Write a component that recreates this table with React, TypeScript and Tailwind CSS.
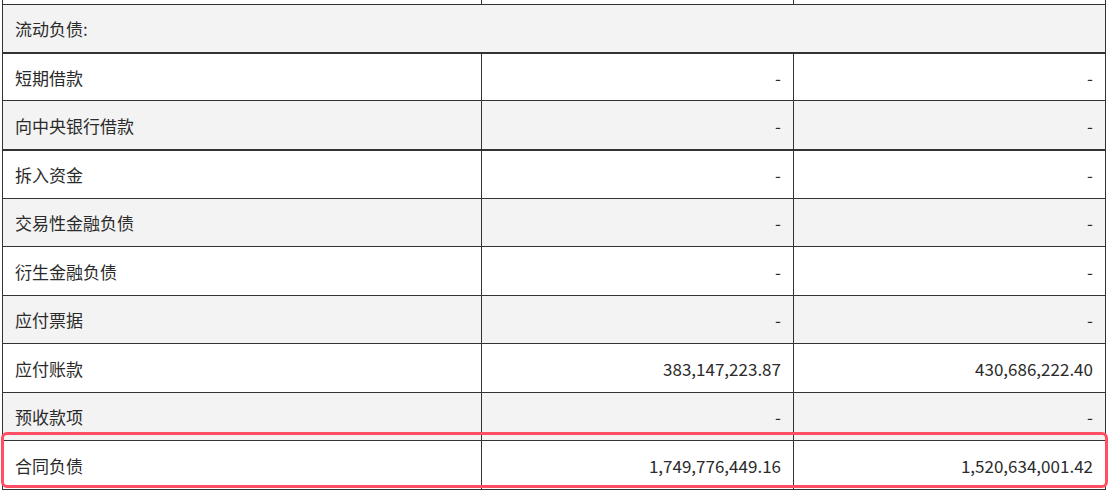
import React from 'react';

type Row = {
  label: string;
  a: string;
  b: string;
  gray: boolean;
  h: string;
  thick?: boolean;
};

const rows: Row[] = [
  { label: '短期借款', a: '-', b: '-', gray: false, h: 'h-[47px]' },
  { label: '向中央银行借款', a: '-', b: '-', gray: true, h: 'h-[50px]', thick: true },
  { label: '拆入资金', a: '-', b: '-', gray: false, h: 'h-[48px]' },
  { label: '交易性金融负债', a: '-', b: '-', gray: true, h: 'h-[48px]' },
  { label: '衍生金融负债', a: '-', b: '-', gray: false, h: 'h-[49px]' },
  { label: '应付票据', a: '-', b: '-', gray: true, h: 'h-[48px]' },
  { label: '应付账款', a: '383,147,223.87', b: '430,686,222.40', gray: false, h: 'h-[49px]' },
  { label: '预收款项', a: '-', b: '-', gray: true, h: 'h-[48px]' },
  { label: '合同负债', a: '1,749,776,449.16', b: '1,520,634,001.42', gray: false, h: 'h-[49px]' },
];

export default function App() {
  return (
    <div
      className="relative h-[490px] w-[1110px] overflow-hidden bg-white text-[17px] leading-none text-[#2b2b2b]"
      style={{ fontFamily: '"Noto Sans CJK SC", "Noto Sans", sans-serif' }}
    >
      <div className="ml-[2px] flex w-[1104px] flex-col border-x border-[#333]">
        {/* tail of the row above */}
        <div className="flex h-[5px] border-b border-[#333] bg-white">
          <div className="w-[478px]" />
          <div className="w-[312px] border-l border-[#333]" />
          <div className="w-[312px] border-l border-[#333]" />
        </div>

        <div className="flex h-[49px] items-center border-b-2 border-[#333] bg-[#f3f3f3] px-[12px]">
          流动负债:
        </div>

        {rows.map((r) => (
          <div
            key={r.label}
            className={`flex ${r.h} ${r.thick ? 'border-b-2' : 'border-b'} border-[#333] ${
              r.gray ? 'bg-[#f3f3f3]' : 'bg-white'
            }`}
          >
            <div className="flex w-[478px] items-center px-[12px]">{r.label}</div>
            <div className="flex w-[312px] items-center justify-end border-l border-[#333] px-[12px]">
              {r.a}
            </div>
            <div className="flex w-[312px] items-center justify-end border-l border-[#333] px-[12px]">
              {r.b}
            </div>
          </div>
        ))}
      </div>

      {/* highlight around the last row */}
      <div className="pointer-events-none absolute left-[1px] top-[432px] h-[56px] w-[1107px] rounded-[6px] border-[3px] border-[#ff4f62]" />
    </div>
  );
}
